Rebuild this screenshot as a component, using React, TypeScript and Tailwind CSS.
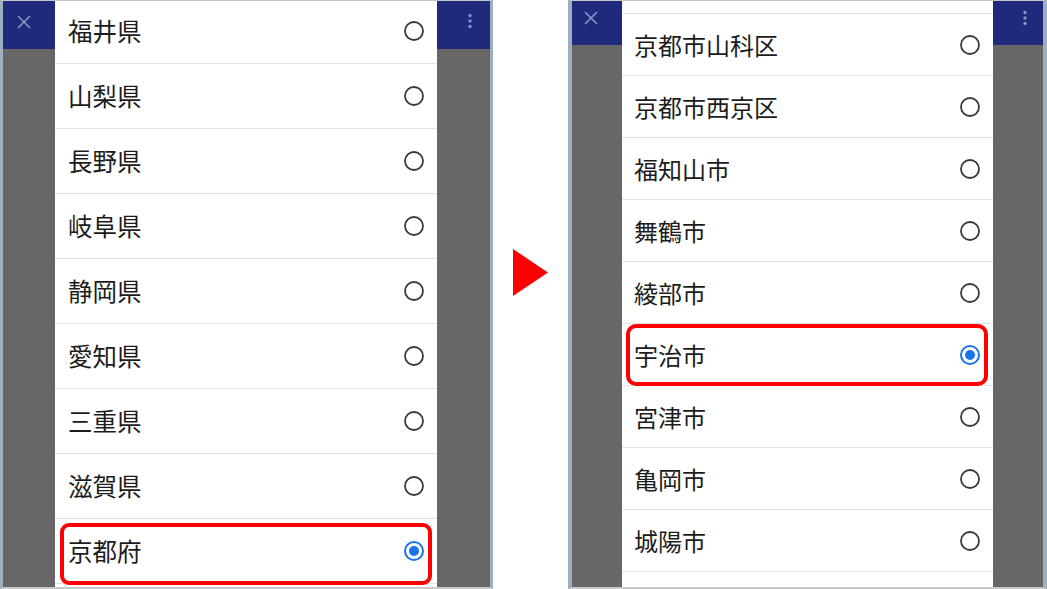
type Item = { label: string; selected?: boolean };

const prefectures: Item[] = [
  { label: '福井県' },
  { label: '山梨県' },
  { label: '長野県' },
  { label: '岐阜県' },
  { label: '静岡県' },
  { label: '愛知県' },
  { label: '三重県' },
  { label: '滋賀県' },
  { label: '京都府', selected: true },
];

const cities: Item[] = [
  { label: '' },
  { label: '京都市山科区' },
  { label: '京都市西京区' },
  { label: '福知山市' },
  { label: '舞鶴市' },
  { label: '綾部市' },
  { label: '宇治市', selected: true },
  { label: '宮津市' },
  { label: '亀岡市' },
  { label: '城陽市' },
  { label: '' },
];

function Radio({ on }: { on?: boolean }) {
  if (on) {
    return (
      <svg width="22" height="22" viewBox="0 0 22 22">
        <circle cx="11" cy="11" r="9" fill="none" stroke="#1a73e8" strokeWidth="2" />
        <circle cx="11" cy="11" r="5" fill="#1a73e8" />
      </svg>
    );
  }
  return (
    <svg width="22" height="22" viewBox="0 0 22 22">
      <circle cx="11" cy="11" r="9" fill="none" stroke="#3a3a3a" strokeWidth="1.8" />
    </svg>
  );
}

function CloseIcon() {
  return (
    <svg width="14" height="14" viewBox="0 0 14 14">
      <path d="M1.5 1.5l11 11M12.5 1.5l-11 11" stroke="#8e96c2" strokeWidth="1.6" strokeLinecap="round" />
    </svg>
  );
}

function Kebab() {
  return (
    <svg width="6" height="16" viewBox="0 0 6 16">
      <circle cx="3" cy="2.5" r="1.7" fill="#8a91bd" />
      <circle cx="3" cy="8" r="1.7" fill="#8a91bd" />
      <circle cx="3" cy="13.5" r="1.7" fill="#8a91bd" />
    </svg>
  );
}

function LeftPhone() {
  return (
    <div className="flex h-[589px] w-[493px] shrink-0 border-x-[3px] border-t border-b-2 border-x-[#9eafbf] border-t-[#c6c6c6] border-b-[#c9c9c9]">
      <div className="flex w-[52px] flex-col">
        <div className="h-[48px] bg-[#1f2a7c] pl-[14px] pt-[14px]">
          <CloseIcon />
        </div>
        <div className="flex-1 bg-[#676767]" />
      </div>

      <div className="w-[382px] overflow-hidden bg-white">
        <div className="-mt-[2px]">
          {prefectures.map((p) => (
            <div
              key={p.label}
              className="relative flex h-[65px] items-center justify-between border-b border-[#e2e2e2] pl-[13px] pr-[12px]"
            >
              <span className="text-[24.5px] leading-none text-[#1c1c1c]">{p.label}</span>
              <Radio on={p.selected} />
              {p.selected && (
                <div className="absolute left-[5px] right-[5px] top-[4px] -bottom-[2px] rounded-[9px] border-4 border-[#ff0000]" />
              )}
            </div>
          ))}
        </div>
      </div>

      <div className="flex w-[53px] flex-col">
        <div className="h-[48px] bg-[#1f2a7c] pl-[30px] pt-[12px]">
          <Kebab />
        </div>
        <div className="flex-1 bg-[#676767]" />
      </div>
    </div>
  );
}

function RightPhone() {
  return (
    <div className="flex h-[589px] w-[479px] shrink-0 border-x-4 border-t border-b-2 border-x-[#9eafbf] border-t-[#c6c6c6] border-b-[#c9c9c9]">
      <div className="flex w-[50px] flex-col">
        <div className="h-[44px] bg-[#1f2a7c] pl-[12px] pt-[10px]">
          <CloseIcon />
        </div>
        <div className="flex-1 bg-[#676767]" />
      </div>

      <div className="w-[371px] overflow-hidden bg-white">
        <div className="-mt-[49px]">
          {cities.map((c, i) => (
            <div
              key={i}
              className="relative flex h-[62px] items-center justify-between border-b border-[#e2e2e2] pl-[12px] pr-[12px]"
            >
              <span className="text-[24px] leading-none text-[#1c1c1c]">{c.label}</span>
              {c.label && <Radio on={c.selected} />}
              {c.selected && (
                <div className="absolute left-[4px] right-[5px] top-0 -bottom-[1px] rounded-[10px] border-4 border-[#ff0000]" />
              )}
            </div>
          ))}
        </div>
      </div>

      <div className="flex w-[50px] flex-col">
        <div className="h-[44px] bg-[#1f2a7c] pl-[29px] pt-[9px]">
          <Kebab />
        </div>
        <div className="flex-1 bg-[#676767]" />
      </div>
    </div>
  );
}

export default function App() {
  return (
    <div className="flex h-[589px] w-[1047px] overflow-hidden bg-white font-['Noto_Sans_CJK_JP','Noto_Sans',sans-serif]">
      <LeftPhone />
      <div className="flex w-[75px] shrink-0 justify-center pt-[249px]">
        <svg width="35" height="47" viewBox="0 0 35 47">
          <path d="M0 0L35 23.5L0 47Z" fill="#ff0000" />
        </svg>
      </div>
      <RightPhone />
    </div>
  );
}
